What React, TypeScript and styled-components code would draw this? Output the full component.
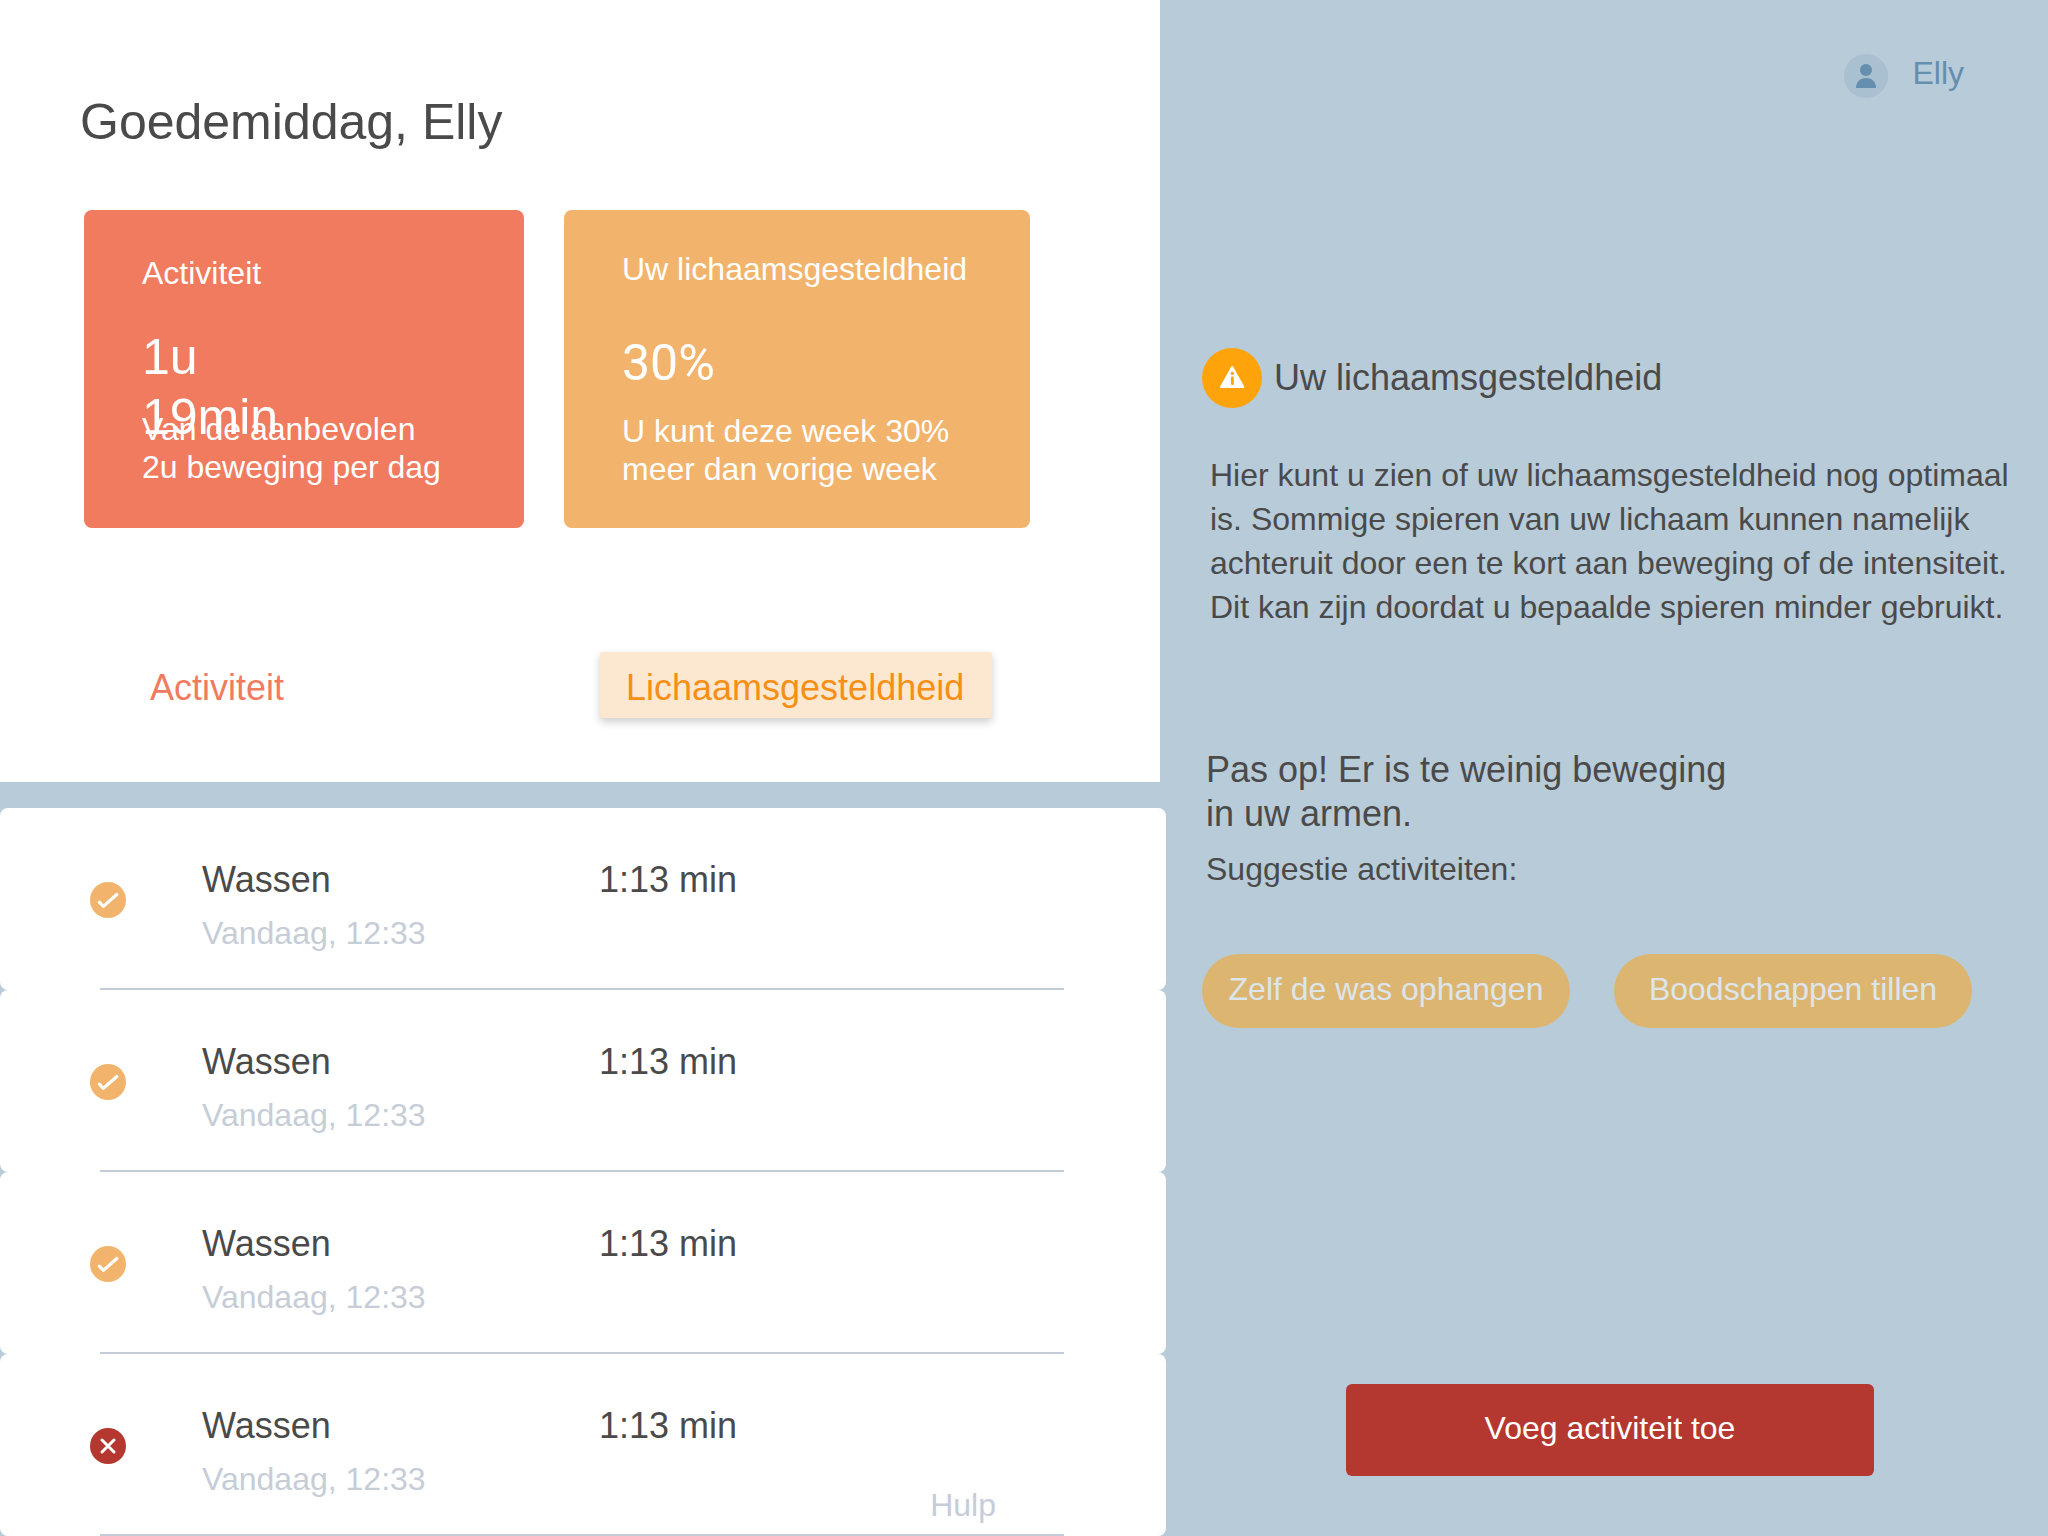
import React from "react";
import styled, { createGlobalStyle } from "styled-components";

const color = {
  page: "#b8cbd9",
  ink: "#4a4a4a",
  muted: "#c6cdd7",
  line: "#c6ccd7",
  coral: "#f07b5f",
  sand: "#f2b46c",
  red: "#b4382f",
  blue: "#648faf",
};

const GlobalStyle = createGlobalStyle`
  *, *::before, *::after { box-sizing: border-box; }
  body {
    margin: 0;
    background: ${color.page};
    color: ${color.ink};
    font-family: "Liberation Sans", Arial, Helvetica, sans-serif;
    font-size: 32px;
    line-height: 38px;
  }
  h1, h2, h3, p, ul { margin: 0; padding: 0; font-weight: 400; }
  button { border: 0; font: inherit; cursor: pointer; }
  a { color: inherit; text-decoration: none; }
`;

const Page = styled.div`
  display: grid;
  grid-template-columns: minmax(0, 1166fr) minmax(0, 882fr);
  min-height: 100vh;
`;

const Main = styled.main`
  display: flex;
  flex-direction: column;
  gap: 26px;
`;

const Overview = styled.section`
  margin-right: 6px;
  padding: 92px 0 64px;
  background: #fff;
`;

const Greeting = styled.h1`
  padding-left: 80px;
  font-size: 50px;
  line-height: 60px;
`;

const Cards = styled.div`
  display: grid;
  grid-template-columns: minmax(0, 440fr) minmax(0, 466fr);
  gap: 40px;
  padding: 58px 130px 124px 84px;
`;

const Card = styled.article<{ $tone: string; $top: number; $rows: string }>`
  display: grid;
  grid-template-rows: ${(p) => p.$rows};
  padding: ${(p) => p.$top}px 72px 40px 58px;
  min-height: 318px;
  border-radius: 8px;
  background: ${(p) => p.$tone};
  color: #fff;
`;

const CardTitle = styled.h2`
  font-size: 32px;
  white-space: nowrap;
`;

const CardValue = styled.p<{ $round?: boolean }>`
  width: 140px;
  height: 60px;
  font-family: ${(p) => (p.$round ? 'Roboto, "Liberation Sans", sans-serif' : "inherit")};
  font-size: 50px;
  line-height: 60px;
`;

const CardText = styled.p`
  min-width: 0;
`;

const Tabs = styled.nav`
  display: grid;
  grid-template-columns: 476px auto;
  justify-content: start;
  justify-items: start;
  padding-left: 124px;
`;

const Tab = styled.button<{ $active?: boolean }>`
  height: 66px;
  padding: 6px 28px 0 26px;
  border-radius: 2px;
  font-size: 36px;
  line-height: 44px;
  background: ${(p) => (p.$active ? "#fce7d0" : "transparent")};
  color: ${(p) => (p.$active ? "#f58f15" : color.coral)};
  box-shadow: ${(p) => (p.$active ? "0 4px 8px rgba(0, 0, 0, 0.2)" : "none")};
`;

const Log = styled.section`
  position: relative;
`;

const LogList = styled.ul`
  list-style: none;
`;

const LogItem = styled.li`
  border-radius: 8px;
  background: #fff;
`;

const Entry = styled.div`
  display: grid;
  grid-template-columns: 112px 397px 1fr;
  padding: 50px 0 36px 90px;
`;

const StatusIcon = styled.svg`
  width: 36px;
  height: 36px;
  margin-top: 24px;
`;

const EntryTitle = styled.h3`
  margin-bottom: 12px;
  font-size: 36px;
  line-height: 44px;
`;

const EntryWhen = styled.p`
  color: ${color.muted};
`;

const EntryTime = styled.p`
  font-size: 36px;
  line-height: 44px;
`;

const Divider = styled.div`
  height: 2px;
  margin: 0 102px 0 100px;
  background: ${color.line};
`;

const HelpLink = styled.a`
  position: absolute;
  right: 170px;
  bottom: 12px;
  color: ${color.muted};
`;

const Side = styled.aside`
  display: flex;
  flex-direction: column;
  padding: 54px 30px 60px 36px;
`;

const User = styled.a`
  display: flex;
  gap: 24px;
  align-self: flex-end;
  margin: 0 54px 250px 0;
  color: ${color.blue};
`;

const Avatar = styled.svg`
  width: 44px;
  height: 44px;
`;

const SideHeading = styled.div`
  display: flex;
  align-items: center;
  gap: 12px;
`;

const WarningIcon = styled.svg`
  width: 60px;
  height: 60px;
`;

const SideTitle = styled.h2`
  font-size: 36px;
  line-height: 44px;
`;

const Explanation = styled.p`
  margin: 45px 0 119px 8px;
  line-height: 44px;
`;

const Alert = styled.p`
  max-width: 540px;
  margin: 0 0 14px 4px;
  font-size: 36px;
  line-height: 44px;
`;

const SuggestionLabel = styled.p`
  margin-left: 4px;
`;

const Suggestions = styled.div`
  display: grid;
  grid-template-columns: 368fr 358fr;
  gap: 44px;
  margin: 66px 46px 60px 0;
`;

const Pill = styled.button`
  height: 74px;
  padding: 0 0 4px;
  border-radius: 37px;
  background: #dcb671;
  color: #dce5eb;
  white-space: nowrap;
`;

const AddButton = styled.button`
  width: 528px;
  max-width: 100%;
  height: 92px;
  margin: auto auto 0;
  padding: 0 0 4px;
  border-radius: 6px;
  background: ${color.red};
  color: #fff;
`;

type LogEntry = { title: string; when: string; time: string; done: boolean };

const entries: LogEntry[] = [
  { title: "Wassen", when: "Vandaag, 12:33", time: "1:13 min", done: true },
  { title: "Wassen", when: "Vandaag, 12:33", time: "1:13 min", done: true },
  { title: "Wassen", when: "Vandaag, 12:33", time: "1:13 min", done: true },
  { title: "Wassen", when: "Vandaag, 12:33", time: "1:13 min", done: false },
];

function Status({ done }: { done: boolean }) {
  return (
    <StatusIcon viewBox="0 0 36 36" fill="none" aria-hidden="true">
      <circle cx="18" cy="18" r="18" fill={done ? color.sand : color.red} />
      <path
        d={done ? "M9.3 20.2 L13.4 24.4 L26.8 12.5" : "M12 12 L24 24 M24 12 L12 24"}
        stroke="#fff"
        strokeWidth={done ? 3.2 : 3}
        strokeLinecap="round"
        strokeLinejoin="round"
      />
    </StatusIcon>
  );
}

export default function App() {
  return (
    <>
      <GlobalStyle />
      <Page>
        <Main>
          <Overview>
            <Greeting>Goedemiddag, Elly</Greeting>
            <Cards>
              <Card $tone={color.coral} $top={44} $rows="73px 83px auto">
                <CardTitle>Activiteit</CardTitle>
                <CardValue>1u 19min</CardValue>
                <CardText>Van de aanbevolen 2u beweging per dag</CardText>
              </Card>
              <Card $tone={color.sand} $top={40} $rows="83px 79px auto">
                <CardTitle>Uw lichaamsgesteldheid</CardTitle>
                <CardValue $round>30%</CardValue>
                <CardText>U kunt deze week 30% meer dan vorige week</CardText>
              </Card>
            </Cards>
            <Tabs>
              <Tab type="button">Activiteit</Tab>
              <Tab type="button" $active aria-pressed="true">
                Lichaamsgesteldheid
              </Tab>
            </Tabs>
          </Overview>
          <Log>
            <LogList>
              {entries.map((entry, index) => (
                <LogItem key={index}>
                  <Entry>
                    <Status done={entry.done} />
                    <div>
                      <EntryTitle>{entry.title}</EntryTitle>
                      <EntryWhen>{entry.when}</EntryWhen>
                    </div>
                    <EntryTime>{entry.time}</EntryTime>
                  </Entry>
                  <Divider />
                </LogItem>
              ))}
            </LogList>
            <HelpLink href="#hulp">Hulp</HelpLink>
          </Log>
        </Main>
        <Side>
          <User href="#profiel">
            <Avatar viewBox="0 0 44 44" aria-hidden="true">
              <circle cx="22" cy="22" r="22" fill="#a8c0d0" />
              <circle cx="22" cy="16" r="6" fill={color.blue} />
              <path d="M12 34 C12 28 16 24 22 24 S32 28 32 34 Z" fill={color.blue} />
            </Avatar>
            Elly
          </User>
          <SideHeading>
            <WarningIcon viewBox="0 0 60 60" aria-hidden="true">
              <circle cx="30" cy="30" r="30" fill="#ffa30b" />
              <path
                d="M30.2 19 L41.4 39 H19 Z"
                fill="#fff"
                stroke="#fff"
                strokeWidth="2"
                strokeLinejoin="round"
              />
              <circle cx="30.4" cy="25.4" r="1.7" fill="#ffa30b" />
              <rect x="29" y="28.4" width="2.8" height="8.6" rx="1.2" fill="#ffa30b" />
            </WarningIcon>
            <SideTitle>Uw lichaamsgesteldheid</SideTitle>
          </SideHeading>
          <Explanation>
            Hier kunt u zien of uw lichaamsgesteldheid nog optimaal is. Sommige spieren van uw
            lichaam kunnen namelijk achteruit door een te kort aan beweging of de intensiteit. Dit
            kan zijn doordat u bepaalde spieren minder gebruikt.
          </Explanation>
          <Alert>Pas op! Er is te weinig beweging in uw armen.</Alert>
          <SuggestionLabel>Suggestie activiteiten:</SuggestionLabel>
          <Suggestions>
            <Pill type="button">Zelf de was ophangen</Pill>
            <Pill type="button">Boodschappen tillen</Pill>
          </Suggestions>
          <AddButton type="button">Voeg activiteit toe</AddButton>
        </Side>
      </Page>
    </>
  );
}
